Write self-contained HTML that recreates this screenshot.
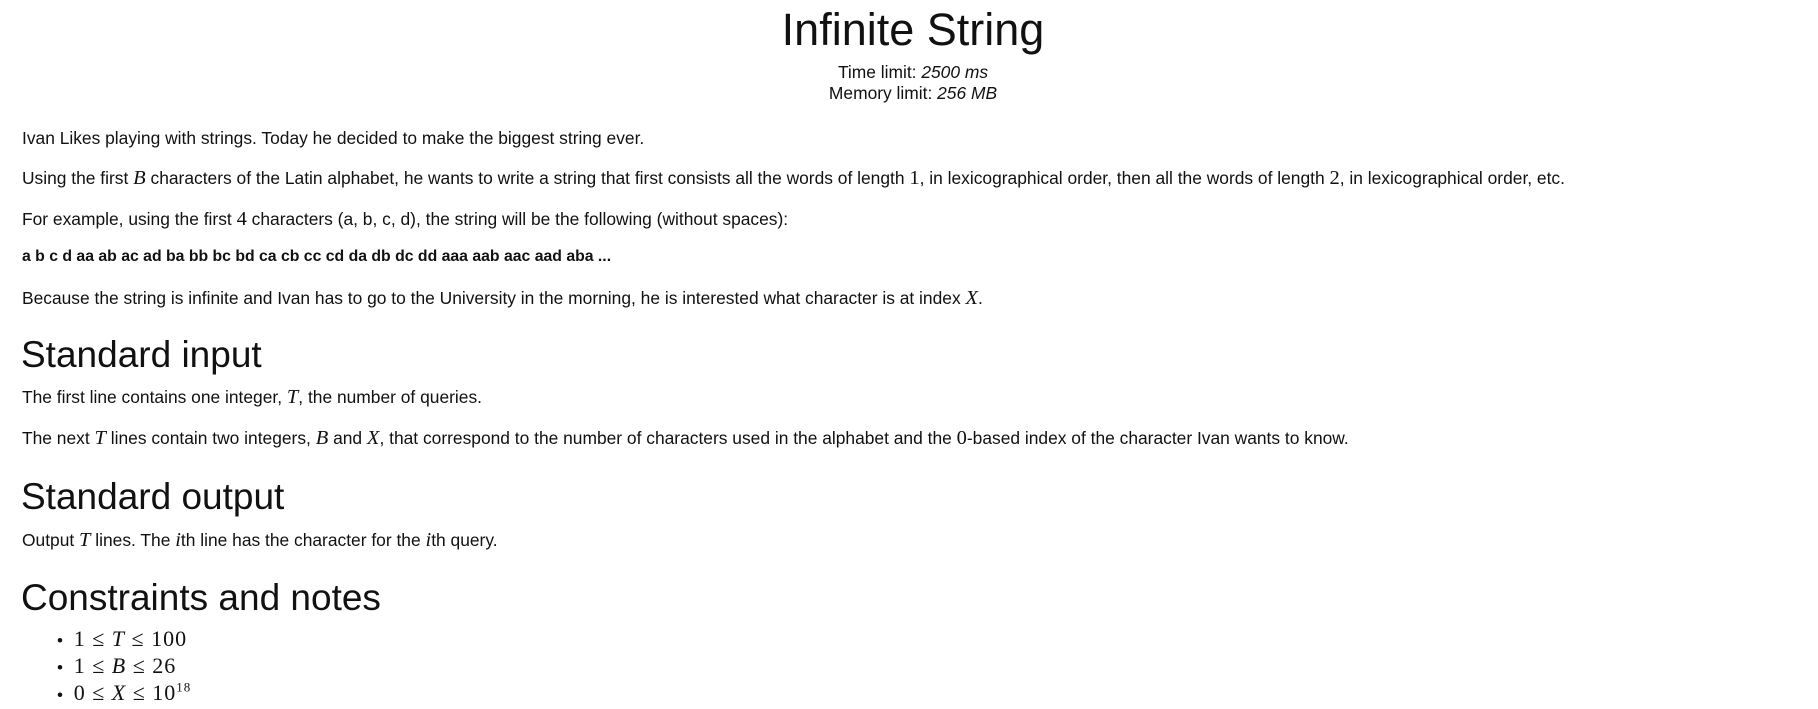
<!DOCTYPE html>
<html><head><meta charset="utf-8"><style>
body{margin:0;width:1818px;height:709px;background:#fff;color:#111;font-family:"Liberation Sans",sans-serif;position:relative;overflow:hidden}
.a{position:absolute;white-space:nowrap}
.p{left:22px;font-size:17.4px}
.h{left:21px;font-size:37px}
.m{font-family:"Liberation Serif",serif;font-style:italic;font-size:20.5px}
.n{font-family:"Liberation Serif",serif;font-size:20.5px}
.c{left:0;width:1826px;text-align:center}
.l{left:57px;font-size:17px}
.l .n{font-size:22px;margin-left:6px;letter-spacing:1px}
</style></head><body>
<div class="a c" style="top:4px;font-size:45px">Infinite String</div>
<div class="a c" style="top:62px;font-size:17.4px">Time limit: <i>2500 ms</i></div>
<div class="a c" style="top:83px;font-size:17.4px">Memory limit: <i>256 MB</i></div>
<div class="a p" style="top:128px">Ivan Likes playing with strings. Today he decided to make the biggest string ever.</div>
<div class="a p" style="top:167px">Using the first <span class="m">B</span> characters of the Latin alphabet, he wants to write a string that first consists all the words of length <span class="n">1</span>, in lexicographical order, then all the words of length <span class="n">2</span>, in lexicographical order, etc.</div>
<div class="a p" style="top:208px">For example, using the first <span class="n">4</span> characters (a, b, c, d), the string will be the following (without spaces):</div>
<div class="a p" style="top:248px;font-weight:bold;font-size:15.8px">a b c d aa ab ac ad ba bb bc bd ca cb cc cd da db dc dd aaa aab aac aad aba ...</div>
<div class="a p" style="top:287px">Because the string is infinite and Ivan has to go to the University in the morning, he is interested what character is at index <span class="m">X</span>.</div>
<div class="a h" style="top:334px">Standard input</div>
<div class="a p" style="top:386px">The first line contains one integer, <span class="m">T</span>, the number of queries.</div>
<div class="a p" style="top:427px">The next <span class="m">T</span> lines contain two integers, <span class="m">B</span> and <span class="m">X</span>, that correspond to the number of characters used in the alphabet and the <span class="n">0</span>-based index of the character Ivan wants to know.</div>
<div class="a h" style="top:476px">Standard output</div>
<div class="a p" style="top:529px">Output <span class="m">T</span> lines. The <span class="m">i</span>th line has the character for the <span class="m">i</span>th query.</div>
<div class="a h" style="top:577px">Constraints and notes</div>
<div class="a l" style="top:626px">• <span class="n">1 ≤ <i>T</i> ≤ 100</span></div>
<div class="a l" style="top:653px">• <span class="n">1 ≤ <i>B</i> ≤ 26</span></div>
<div class="a l" style="top:680px">• <span class="n">0 ≤ <i>X</i> ≤ 10<sup style="font-size:13px">18</sup></span></div>
</body></html>
